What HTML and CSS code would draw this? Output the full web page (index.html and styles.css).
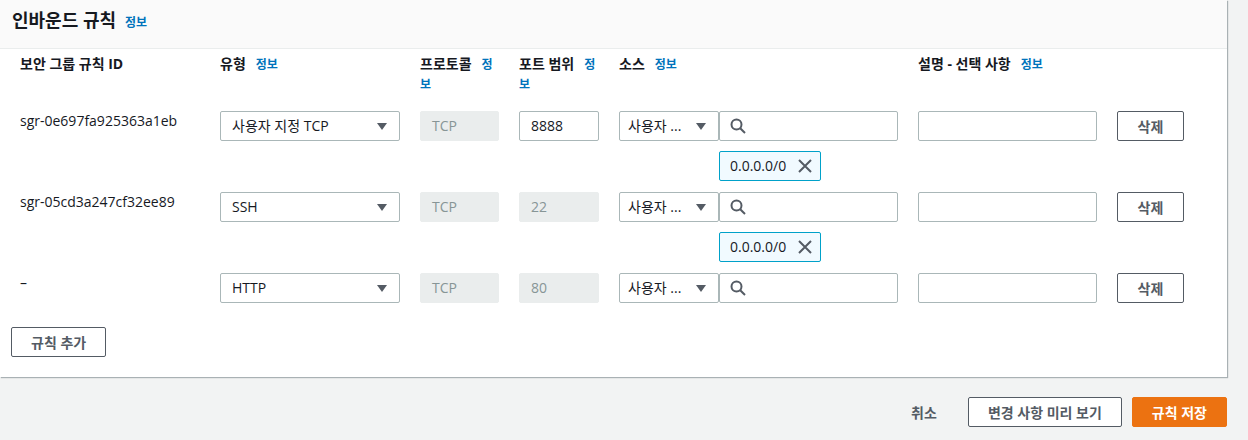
FILE: index.html
```html
<!DOCTYPE html>
<html lang="ko">
<head>
	<meta charset="utf-8">
	<title>인바운드 규칙 편집</title>
	<link rel="stylesheet" href="styles.css">
</head>
<body>
	<div class="panel">
		<div class="panel-head">
			<h2>인바운드 규칙</h2><a class="info" href="#">정보</a>
		</div>
		<div class="panel-body">
			<div class="grid col-heads">
				<div>보안 그룹 규칙 ID</div>
				<div>유형<a class="info" href="#">정보</a></div>
				<div>프로토콜<a class="info" href="#">정보</a></div>
				<div>포트 범위<a class="info" href="#">정보</a></div>
				<div>소스<a class="info" href="#">정보</a></div>
				<div>설명 - 선택 사항<a class="info" href="#">정보</a></div>
				<div></div>
			</div>

			<div class="rules">
				<!-- 규칙 1 -->
				<div class="grid rule">
					<div class="rule-id">sgr-0e697fa925363a1eb</div>
					<div class="select">사용자 지정 TCP<span class="caret"></span></div>
					<div class="field disabled">TCP</div>
					<div class="field">8888</div>
					<div class="source">
						<div class="source-row">
							<div class="select small">사용자 ...<span class="caret"></span></div>
							<div class="search">
								<svg width="16" height="16" viewBox="0 0 16 16"><circle cx="6.5" cy="6.5" r="5" fill="none" stroke="#545b64" stroke-width="2"/><line x1="10.2" y1="10.2" x2="15" y2="15" stroke="#545b64" stroke-width="2"/></svg>
							</div>
						</div>
						<div class="token">0.0.0.0/0
							<svg width="14" height="14" viewBox="0 0 14 14"><path d="M1 1 L13 13 M13 1 L1 13" stroke="#545b64" stroke-width="2" fill="none"/></svg>
						</div>
					</div>
					<div class="field"></div>
					<button class="btn">삭제</button>
				</div>

				<!-- 규칙 2 -->
				<div class="grid rule">
					<div class="rule-id">sgr-05cd3a247cf32ee89</div>
					<div class="select">SSH<span class="caret"></span></div>
					<div class="field disabled">TCP</div>
					<div class="field disabled">22</div>
					<div class="source">
						<div class="source-row">
							<div class="select small">사용자 ...<span class="caret"></span></div>
							<div class="search">
								<svg width="16" height="16" viewBox="0 0 16 16"><circle cx="6.5" cy="6.5" r="5" fill="none" stroke="#545b64" stroke-width="2"/><line x1="10.2" y1="10.2" x2="15" y2="15" stroke="#545b64" stroke-width="2"/></svg>
							</div>
						</div>
						<div class="token">0.0.0.0/0
							<svg width="14" height="14" viewBox="0 0 14 14"><path d="M1 1 L13 13 M13 1 L1 13" stroke="#545b64" stroke-width="2" fill="none"/></svg>
						</div>
					</div>
					<div class="field"></div>
					<button class="btn">삭제</button>
				</div>

				<!-- 규칙 3 -->
				<div class="grid rule">
					<div class="rule-id">–</div>
					<div class="select">HTTP<span class="caret"></span></div>
					<div class="field disabled">TCP</div>
					<div class="field disabled">80</div>
					<div class="source">
						<div class="source-row">
							<div class="select small">사용자 ...<span class="caret"></span></div>
							<div class="search">
								<svg width="16" height="16" viewBox="0 0 16 16"><circle cx="6.5" cy="6.5" r="5" fill="none" stroke="#545b64" stroke-width="2"/><line x1="10.2" y1="10.2" x2="15" y2="15" stroke="#545b64" stroke-width="2"/></svg>
							</div>
						</div>
					</div>
					<div class="field"></div>
					<button class="btn">삭제</button>
				</div>
			</div>

			<button class="btn add">규칙 추가</button>
		</div>
	</div>

	<div class="footer">
		<button class="btn link">취소</button>
		<button class="btn">변경 사항 미리 보기</button>
		<button class="btn primary">규칙 저장</button>
	</div>
</body>
</html>
```

FILE: styles.css
```css
body{
	margin: 0;
	background-color: #f2f3f3;
	color: #16191f;
	font-family: "Open Sans", "Noto Sans CJK KR", sans-serif;
	font-size: 14px;
	line-height: 20px;
	font-feature-settings: "palt";
}

.panel{
	width: 1227px;
	background-color: #fff;
	box-shadow: 1px 1px 1px 0 rgba(0, 28, 36, 0.3);
}

.panel-head{
	box-sizing: border-box;
	height: 49px;
	padding: 9px 12px 0;
	display: flex;
	align-items: baseline;
	background-color: #fafafa;
	border-bottom: 1px solid #eaeded;
}

.panel-head h2{
	margin: 0;
	font-size: 18px;
	line-height: 22px;
	font-weight: 700;
}

.info{
	margin-left: 10px;
	color: #0073bb;
	font-size: 12px;
	line-height: 14px;
	font-weight: 700;
	text-decoration: none;
}

.panel-head .info{
	margin-left: 9px;
}

.panel-body{
	padding: 0 0 20px 11px;
}

.grid{
	display: grid;
	grid-template-columns: 180px 180px 79px 80px 279px 179px 67px;
	column-gap: 20px;
	padding-left: 9px;
}

.col-heads{
	margin-top: 5px;
	font-weight: 700;
}

.rules{
	margin-top: 17px;
	display: flex;
	flex-direction: column;
	gap: 11px;
}

.rule{
	align-items: start;
}

.select, .field, .search{
	box-sizing: border-box;
	height: 30px;
	border: 1px solid #aab7b8;
	border-radius: 2px;
	background-color: #fff;
}

.select{
	padding: 0 12px 0 11px;
	display: flex;
	align-items: center;
	justify-content: space-between;
}

.caret{
	width: 0;
	height: 0;
	border-left: 5px solid transparent;
	border-right: 5px solid transparent;
	border-top: 7px solid #545b64;
}

.field{
	padding: 4px 11px;
}

.field.disabled{
	background-color: #eaeded;
	border-color: #eaeded;
	color: #879596;
}

.source-row{
	display: flex;
}

.select.small{
	width: 100px;
	padding: 0 12px 0 8px;
	flex-shrink: 0;
}

.search{
	flex: 1;
	padding: 0 10px;
	display: flex;
	align-items: center;
}

.token{
	box-sizing: border-box;
	width: 102px;
	height: 30px;
	margin: 10px 0 0 100px;
	padding: 0 8px 0 10px;
	display: flex;
	align-items: center;
	justify-content: space-between;
	background-color: #f1faff;
	border: 1px solid #00a1c9;
	border-radius: 2px;
}

.btn{
	box-sizing: border-box;
	height: 30px;
	padding: 0 19px;
	background-color: #fff;
	border: 1px solid #545b64;
	border-radius: 2px;
	color: #545b64;
	font-family: inherit;
	font-size: 14px;
	font-weight: 700;
	font-feature-settings: "palt";
}

.add{
	margin-top: 24px;
}

.footer{
	width: 1227px;
	padding-top: 20px;
	display: flex;
	justify-content: flex-end;
	gap: 10px;
}

.btn.link{
	border-color: transparent;
	background-color: transparent;
	padding: 0 20px;
}

.btn.primary{
	background-color: #ec7211;
	border-color: #ec7211;
	color: #fff;
}
```
